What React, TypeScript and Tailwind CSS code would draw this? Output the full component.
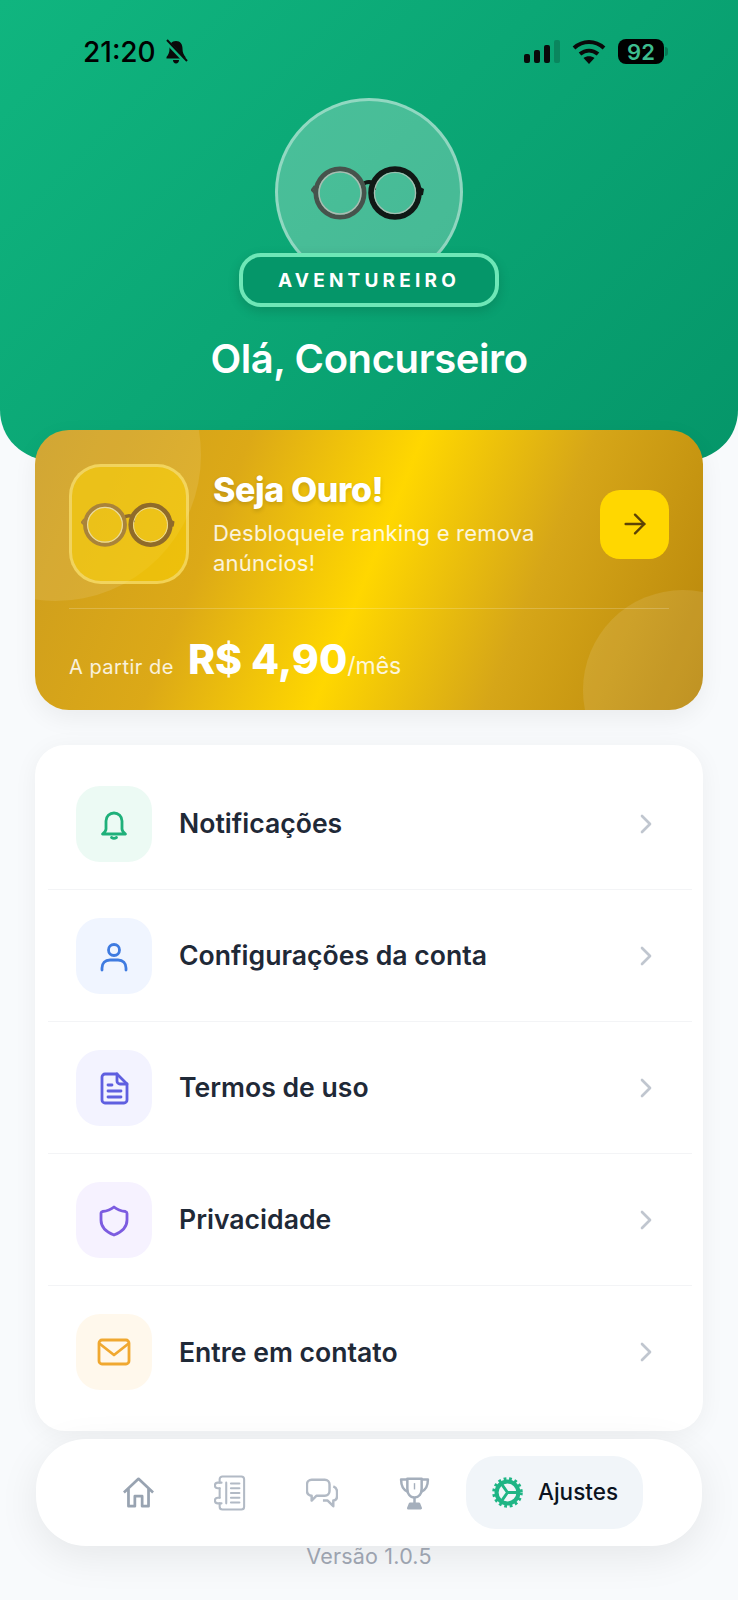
import React from 'react';
import { ArrowRight, ChevronRight } from 'lucide-react';

// round glasses, drawn twice in different colours (avatar + gold card)
function Glasses({ left, right, rim, className }: { left: string; right: string; rim: string; className: string }) {
  return (
    <svg viewBox="0 0 116 72" className={className} fill="none">
      <path d="M51 29c4-4 10-4 14 0" stroke={right} strokeWidth="4" />
      <path d="M52 29v5M64 29v5" stroke={right} strokeWidth="2" />
      <path d="M4 30 1 34l3 3" stroke={left} strokeWidth="2.500" />
      <path d="M107 30l6 3-1 6-5 1z" fill={right} />
      <circle cx="29" cy="37" r="24" stroke={left} strokeWidth="5" />
      <circle cx="29" cy="37" r="21" stroke={rim} strokeWidth="1.500" />
      <circle cx="84" cy="37" r="24" stroke={right} strokeWidth="5.500" />
      <circle cx="84" cy="37" r="20.500" stroke={rim} strokeWidth="1.200" />
    </svg>
  );
}

function StatusBar() {
  return (
    <div className="flex items-center justify-between pl-[83px] pr-[70px] pt-[33px] h-[70px]">
      <div className="flex items-center gap-[8px] text-black">
        <span className="text-[28px] leading-none font-medium">21:20</span>
        <svg viewBox="0 0 24 26" className="w-[24px] h-[26px]" fill="#0a0a0a">
          <path d="M12 2c-4.500 0-6.500 3.500-6.500 7.500 0 4-1 6-3 8.500v1.500h19V18c-2-2.500-3-4.500-3-8.500C18.500 5.500 16.500 2 12 2z" />
          <path d="M9 21h6c0 2-1.300 3.500-3 3.500S9 23 9 21z" />
          <path d="M2 2l20 21" stroke="#10b27c" strokeWidth="4" />
          <path d="M3 1l20 21" stroke="#0a0a0a" strokeWidth="2" />
        </svg>
      </div>
      <div className="flex items-center">
        <svg viewBox="0 0 38 26" className="w-[38px] h-[26px] mr-[11px]">
          <rect x="1" y="15" width="6" height="9" rx="2" fill="#0a0a0a" />
          <rect x="11" y="11" width="6" height="13" rx="2" fill="#0a0a0a" />
          <rect x="21" y="6" width="6" height="18" rx="2" fill="#0a0a0a" />
          <rect x="31" y="1" width="6" height="23" rx="2" fill="#0a0a0a" fillOpacity="0.2" />
        </svg>
        <svg viewBox="0 0 34 26" className="w-[34px] h-[26px] mr-[12px]" fill="none" stroke="#0a0a0a" strokeWidth="4">
          <path d="M2 9c9-8 21-8 30 0" />
          <path d="M8 15c5.500-4.500 12.500-4.500 18 0" />
          <path d="M17 25l-5.500-6c3-2.500 8-2.500 11 0z" fill="#0a0a0a" stroke="none" />
        </svg>
        <div className="w-[46px] h-[25px] rounded-[8px] bg-black flex items-center justify-center text-[22px] leading-none font-semibold text-[#3dbd8f]">
          92
        </div>
        <div className="w-[3px] h-[9px] ml-[1px] rounded-r-sm bg-black/25" />
      </div>
    </div>
  );
}

function Header() {
  return (
    <div className="h-[460px] rounded-b-[50px] bg-[linear-gradient(135deg,#10b57f_0%,#059669_100%)]">
      <StatusBar />
      <div className="relative flex flex-col items-center mt-[28px]">
        <div className="w-[188px] h-[188px] rounded-full bg-white/25 border-[3px] border-white/40 flex items-center justify-center">
          <Glasses left="#46534c" right="#101815" rim="#a9bdb2" className="w-[116px] h-[72px]" />
        </div>
        <div className="absolute top-[155px] left-1/2 -translate-x-1/2 w-[260px] h-[54px] rounded-[22px] border-[4px] border-[#6ee7b7] bg-[#059669] shadow-[0_4px_12px_rgba(0,0,0,0.15)] flex items-center justify-center">
          <span className="text-[19px] leading-none font-bold tracking-[4.2px] text-white">AVENTUREIRO</span>
        </div>
        <h1 className="mt-[50px] text-[40px] leading-[46px] font-semibold tracking-[-0.4px] text-white">Olá, Concurseiro</h1>
      </div>
    </div>
  );
}

function GoldCard() {
  return (
    <div className="relative overflow-hidden mx-[35px] -mt-[30px] h-[280px] rounded-[34px] px-[34px] pt-[34px] bg-[linear-gradient(112deg,#cc9c1e_0%,#dca917_28%,#ffd700_50%,#d6a618_72%,#b8860b_100%)] shadow-[0_8px_24px_rgba(0,0,0,0.06)]">
      <div className="absolute -left-[126px] -top-[121px] w-[292px] h-[292px] rounded-full bg-white/10" />
      <div className="absolute -right-[80px] -bottom-[80px] w-[200px] h-[200px] rounded-full bg-white/10" />
      <div className="relative flex items-center">
        <div className="w-[120px] h-[120px] rounded-[32px] bg-[#ffd700]/50 border-[3px] border-white/30 flex items-center justify-center shrink-0">
          <Glasses left="#a9833a" right="#8f6b2a" rim="#e8d9a0" className="w-[96px] h-[60px]" />
        </div>
        <div className="ml-[24px] flex-1">
          <div className="text-[34px] leading-[38px] font-extrabold tracking-[-0.4px] text-white [text-shadow:0_2px_4px_rgba(0,0,0,0.15)]">Seja Ouro!</div>
          <div className="mt-[9px] w-[340px] text-[22px] leading-[30px] tracking-[0.2px] text-white/85">Desbloqueie ranking e remova anúncios!</div>
        </div>
        <div className="w-[69px] h-[69px] rounded-[20px] bg-[#ffd700] flex items-center justify-center shrink-0">
          <ArrowRight className="w-[32px] h-[32px] text-[#5c4306]" strokeWidth={1.8} />
        </div>
      </div>
      <div className="relative h-px mt-[24px] bg-white/20" />
      <div className="relative flex items-baseline mt-[24px] text-white">
        <span className="text-[20px] tracking-[0.5px] text-white/85">A partir de</span>
        <span className="ml-[14px] text-[41px] leading-[52px] font-extrabold">R$ 4,90</span>
        <span className="text-[23px] text-white/85">/mês</span>
      </div>
    </div>
  );
}

const icons: Record<string, React.ReactNode> = {
  bell: (
    <>
      <path d="M7 20V12a8 8 0 0 1 16 0v8c0 1.500 1.500 3.500 3.500 5h-23C5.500 23.500 7 21.500 7 20z" />
      <path d="M12.500 28.500c1.500 1 3.500 1 5 0" />
    </>
  ),
  user: (
    <>
      <circle cx="15" cy="9" r="5.500" />
      <path d="M3 29v-2c0-5 3-8 8-8h8c5 0 8 3 8 8v2" />
    </>
  ),
  doc: (
    <>
      <path d="M6 1h12l10 10v16a3 3 0 0 1-3 3H6a3 3 0 0 1-3-3V4a3 3 0 0 1 3-3z" />
      <path d="M18 1v7a3 3 0 0 0 3 3h7" />
      <path d="M9 12h4M9 18h13M9 24h13" />
    </>
  ),
  shield: <path d="M15 2c3 2.500 7 4 11.500 4.500a2 2 0 0 1 1.500 2V15c0 7-5 12-13 15C7 27 2 22 2 15V8.500a2 2 0 0 1 1.500-2C8 6 12 4.500 15 2z" />,
  mail: (
    <>
      <rect x="0" y="3" width="30" height="24" rx="3" />
      <path d="M1 7l14 11L29 7" />
    </>
  ),
};

const rows = [
  { label: 'Notificações', icon: 'bell', color: '#1fb07a', bg: 'bg-[#ecfaf4]' },
  { label: 'Configurações da conta', icon: 'user', color: '#3f7be0', bg: 'bg-[#f0f5ff]' },
  { label: 'Termos de uso', icon: 'doc', color: '#5f5fe0', bg: 'bg-[#f3f3ff]' },
  { label: 'Privacidade', icon: 'shield', color: '#7c5ce0', bg: 'bg-[#f6f2ff]' },
  { label: 'Entre em contato', icon: 'mail', color: '#f0a830', bg: 'bg-[#fff8ec]' },
];

function Menu() {
  return (
    <div className="mx-[35px] mt-[35px] rounded-[30px] bg-white py-[13px] pl-[13px] pr-[11px] shadow-[0_4px_24px_rgba(0,0,0,0.05)]">
      {rows.map((row, i) => (
        <div key={row.label} className={`flex items-center h-[132px] pl-[28px] pr-[30px] ${i < rows.length - 1 ? 'border-b border-[#f3f4f6]' : ''}`}>
          <div className={`w-[76px] h-[76px] rounded-[24px] flex items-center justify-center ${row.bg}`}>
            <svg viewBox="0 0 30 30" className="w-[30px] h-[30px] overflow-visible" fill="none" stroke={row.color} strokeWidth="2.800" strokeLinecap="round" strokeLinejoin="round">
              {icons[row.icon]}
            </svg>
          </div>
          <span className="ml-[27px] flex-1 text-[26.6px] leading-none font-semibold text-[#1f2937]">{row.label}</span>
          <ChevronRight className="w-[32px] h-[32px] text-[#c0c6cf]" strokeWidth={2} />
        </div>
      ))}
    </div>
  );
}

function BottomNav() {
  return (
    <div className="absolute left-[36px] top-[1439px] w-[666px] h-[107px] rounded-[50px] bg-white shadow-[0_10px_40px_rgba(0,0,0,0.08)] flex items-center pl-[56px]">
      <div className="w-[92px] flex justify-center">
        <svg viewBox="0 0 34 34" className="w-[31px] h-[31px]" fill="none" stroke="#98a3b1" strokeWidth="3" strokeLinejoin="round">
          <path d="M1 17 17 2l16 15M6 13v19h7V21h8v11h7V13" />
        </svg>
      </div>
      <div className="w-[92px] flex justify-center">
        <svg viewBox="0 0 34 38" className="w-[32px] h-[36px]" fill="none" stroke="#b2bac5" strokeWidth="2.200" strokeLinecap="round">
          <path d="M6 8V4.500a3 3 0 0 1 3-3h20a3 3 0 0 1 3 3v29a3 3 0 0 1-3 3H9a3 3 0 0 1-3-3V30M6 14v10" />
          <path d="M6 14H4a3 3 0 0 1 0-6h4M6 24H4a3 3 0 0 0 0 6h4" />
          <path d="M13 8v22M18 9h9M18 14h9M18 19h9M18 24h9M18 29h9" />
        </svg>
      </div>
      <div className="w-[92px] flex justify-center">
        <svg viewBox="0 0 34 34" className="w-[32px] h-[32px]" fill="none" stroke="#b2bac5" strokeWidth="2.600" strokeLinejoin="round">
          <path d="M6 3h14a5 5 0 0 1 5 5v7a5 5 0 0 1-5 5H11l-5 5v-5a5 5 0 0 1-5-5V8a5 5 0 0 1 5-5z" />
          <path d="M29 10c2.500 1 4 3 4 6v4c0 3-1.500 5-4 5v6l-6-6h-5" />
        </svg>
      </div>
      <div className="w-[92px] flex justify-center">
        <svg viewBox="0 0 34 38" className="w-[31px] h-[34px]" fill="none" stroke="#a5afbc" strokeWidth="2.800" strokeLinejoin="round">
          <path d="M9 3h16v11c0 6-3 10-8 10s-8-4-8-10z" />
          <path d="M9 4H2c0 7 2 12 8 14M25 4h7c0 7-2 12-8 14" />
          <path d="M17 24v7" />
          <path d="M10 36l2-5h10l2 5z" fill="#a5afbc" />
          <path d="M17 8v7" strokeWidth="1.600" />
        </svg>
      </div>
      <div className="ml-[6px] w-[177px] h-[73px] rounded-[30px] bg-[#f1f5f9] flex items-center pl-[26px]">
        <svg viewBox="0 0 34 38" className="w-[31px] h-[35px]" fill="none" stroke="#1fb585">
          <circle cx="17" cy="19" r="12" strokeWidth="4.500" />
          <circle cx="17" cy="19" r="15" strokeWidth="3.500" strokeDasharray="3 3" />
          <path d="M17 19h12M17 19l-7-10M17 19l-7 10" strokeWidth="3.200" />
        </svg>
        <span className="ml-[15px] text-[22.5px] leading-none font-medium text-[#0b1220]">Ajustes</span>
      </div>
    </div>
  );
}

export default function App() {
  return (
    <div className="relative h-[1600px] w-[738px] overflow-hidden bg-[#f8fafc] font-['Inter',sans-serif]">
      <Header />
      <GoldCard />
      <Menu />
      <BottomNav />
      <div className="absolute left-0 right-0 top-[1544px] text-center text-[21.5px] leading-[24px] tracking-[0.2px] text-[#9ca3af]">Versão 1.0.5</div>
    </div>
  );
}
